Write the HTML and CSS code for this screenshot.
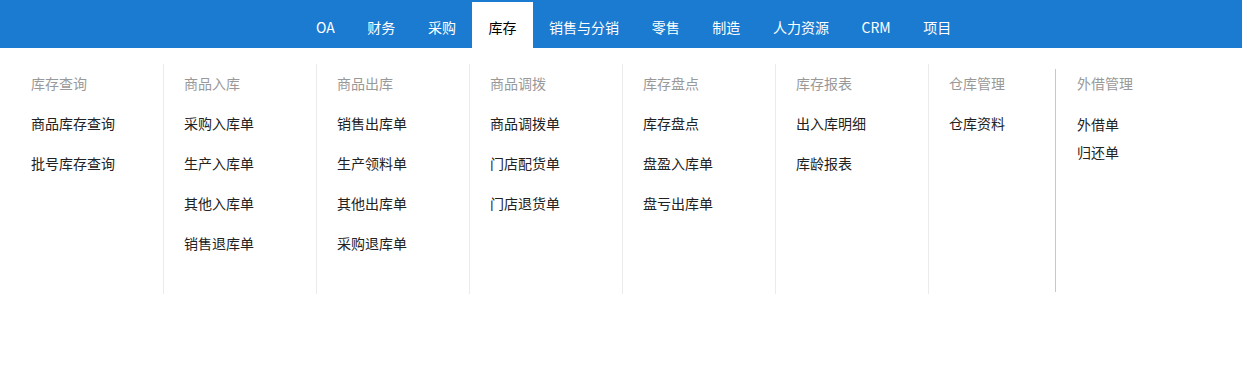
FILE: index.html
```html
<!DOCTYPE html>
<html lang="zh-CN">
<head>
    <meta charset="UTF-8">
    <meta name="viewport" content="width=device-width, initial-scale=1.0">
    <title>库存</title>
    <link rel="stylesheet" href="styles.css">
</head>
<body>
    <div class="topbar">
        <ul class="nav">
            <li>OA</li>
            <li>财务</li>
            <li>采购</li>
            <li class="active">库存</li>
            <li>销售与分销</li>
            <li>零售</li>
            <li>制造</li>
            <li>人力资源</li>
            <li>CRM</li>
            <li>项目</li>
        </ul>
    </div>

    <div class="dropdown">
        <div class="col first">
            <div class="col-title">库存查询</div>
            <a>商品库存查询</a>
            <a>批号库存查询</a>
        </div>
        <div class="col">
            <div class="col-title">商品入库</div>
            <a>采购入库单</a>
            <a>生产入库单</a>
            <a>其他入库单</a>
            <a>销售退库单</a>
        </div>
        <div class="col">
            <div class="col-title">商品出库</div>
            <a>销售出库单</a>
            <a>生产领料单</a>
            <a>其他出库单</a>
            <a>采购退库单</a>
        </div>
        <div class="col">
            <div class="col-title">商品调拨</div>
            <a>商品调拨单</a>
            <a>门店配货单</a>
            <a>门店退货单</a>
        </div>
        <div class="col">
            <div class="col-title">库存盘点</div>
            <a>库存盘点</a>
            <a>盘盈入库单</a>
            <a>盘亏出库单</a>
        </div>
        <div class="col">
            <div class="col-title">库存报表</div>
            <a>出入库明细</a>
            <a>库龄报表</a>
        </div>
        <div class="col narrow">
            <div class="col-title">仓库管理</div>
            <a>仓库资料</a>
        </div>
        <div class="col extra">
            <div class="col-title">外借管理</div>
            <a>外借单</a>
            <a>归还单</a>
        </div>
    </div>
</body>
</html>
```

FILE: styles.css
```css
body {
    margin: 0;
    background: #fff;
    font-family: "Noto Sans CJK SC", "Noto Sans", sans-serif;
    font-size: 14px;
}

.topbar {
    height: 48px;
    background-color: #1a7bd0;
}

.nav {
    list-style: none;
    margin: 0;
    padding: 0 0 0 299.7px;
    display: flex;
}

.nav li {
    margin-top: 2px;
    padding: 4px 16.3px 0;
    height: 42px;
    line-height: 42px;
    color: #fff;
    white-space: nowrap;
}

.nav li.active {
    background: #fff;
    color: #000;
}

.dropdown {
    display: flex;
    align-items: flex-start;
    padding: 16px 0 0 10px;
}

.col {
    box-sizing: border-box;
    width: 153px;
    height: 230px;
    padding-left: 20px;
    border-left: 1px solid #ebebeb;
    display: flex;
    flex-direction: column;
}

.col.first {
    padding-left: 21px;
    border-left: none;
}

.col.narrow {
    width: 127px;
}

.col-title,
.col a {
    line-height: 38px;
    padding-bottom: 2px;
}

.col-title {
    color: #999;
}

.col a {
    color: #222;
}

.col.extra {
    margin-top: 5px;
    height: 223px;
    padding-left: 21px;
    border-left-color: #c8c8c8;
}

.col.extra .col-title {
    line-height: 28px;
}

.col.extra a {
    line-height: 28px;
    padding-bottom: 0;
}

.col.extra .col-title + a {
    margin-top: 11px;
}
```
